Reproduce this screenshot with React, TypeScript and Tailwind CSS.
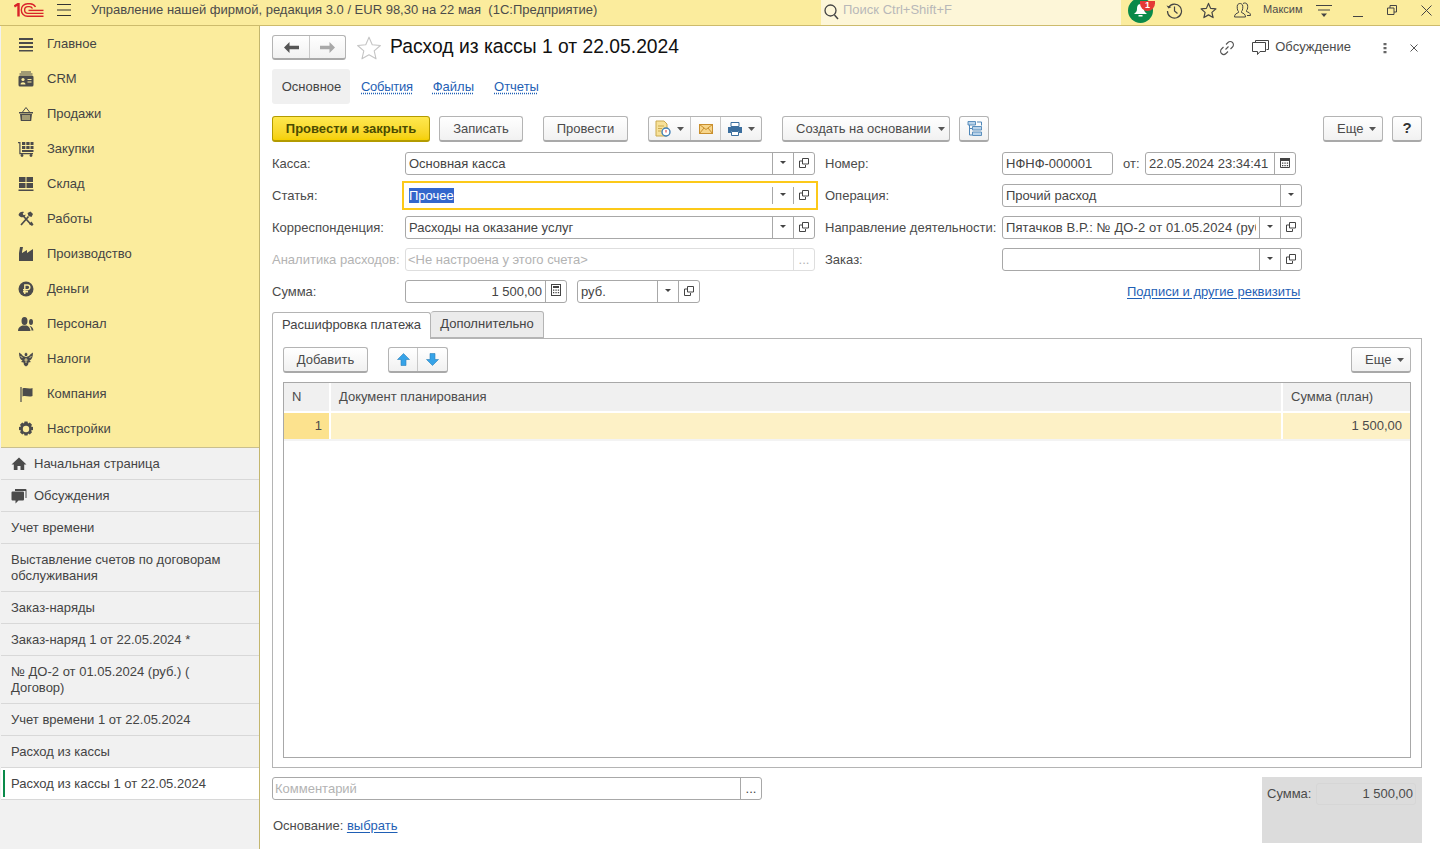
import React from 'react';

const G = '#4b4b4b';
const Svg = ({ s = 16, className = '', children, vb = '0 0 16 16' }: any) => (
  <svg width={s} height={s} viewBox={vb} className={'shrink-0 ' + className}>{children}</svg>
);

const Logo = () => (
  <svg width="30" height="14" viewBox="0 0 30 14" className="shrink-0">
    <g fill="none" stroke="#d9232a" strokeWidth="1.4">
      <path d="M0.300 3.500 L4.500 0.800 V13.500" strokeWidth="2.400" />
      <path d="M29.500 13.200 H13.500 A6.200 6.200 0 0 1 13.500 0.800 H16 A6.200 6.200 0 0 1 21.500 4" />
      <path d="M29.500 10.400 H14 A3.400 3.400 0 0 1 14 3.600 H15.500 A3.500 3.500 0 0 1 18.500 5.500" />
      <path d="M14.500 7.400 H29.500" />
    </g>
  </svg>
);
const Burger = () => (
  <Svg s={14} vb="0 0 14 14"><path d="M0 1.500H14M0 7H14M0 12.500H14" stroke="#333" strokeWidth="1" fill="none" /></Svg>
);
const IMain = () => <Svg><path d="M1 2h14v2H1zM1 6h14v2H1zM1 10h14v2H1zM1 14h14v1.500H1z" fill={G} /></Svg>;
const ICrm = () => <Svg><path d="M3 0.500h10v1H3zM1.500 2.500h13v1h-13z" fill={G} /><rect x="0.500" y="4.500" width="15" height="11" rx="1.500" fill={G} /><circle cx="5" cy="8.500" r="1.600" fill="#fbec9d" /><path d="M2.500 13.500c0-3 5-3 5 0zM9.500 8h4v1h-4zM9.500 10.500h4v1h-4z" fill="#fbec9d" /></Svg>;
const IBasket = () => <Svg><path d="M1 6h14v1.500H1zM2 8h12l-.8 7H2.800z" fill={G} /><path d="M4.500 6L8 1.500 11.500 6" stroke={G} fill="none" /><path d="M5 9v5M7 9v5M9 9v5M11 9v5" stroke="#fbec9d" /></Svg>;
const IBuy = () => <Svg><path d="M0 1h2.500v11H15v1.300H1.300V2.300H0z" fill={G} /><path d="M4 1h3.300v3H4zM8.300 1h3.300v3H8.300zM12.500 1h3v3h-3zM4 5h3.300v3H4zM8.300 5h3.300v3H8.300zM12.500 5h3v3h-3zM4 9h11.500v2H4z" fill={G} /><circle cx="4" cy="14.500" r="1.400" fill={G} /><circle cx="13" cy="14.500" r="1.400" fill={G} /></Svg>;
const IStore = () => <Svg><path d="M1 1h6.500v5H1zM8.500 1H15v5H8.500zM1 7h6.500v5H1zM8.500 7H15v5H8.500zM0.500 13.500h15V15h-15z" fill={G} /></Svg>;
const ITools = () => <Svg><path d="M3 14l7.500-8.500M3.500 3l9.500 10.500" stroke={G} strokeWidth="1.700" fill="none" /><path d="M0.500 4C1 1 4 0 6 1L4.500 3 5.500 4.500 7.500 3.500C8 6 3 8 .5 4zM9.500 2l3-1.500L15 3l-1.500 3-3-1z" fill={G} /><path d="M11 13l3 2 1.500-1.500-2-3z" fill={G} /></Svg>;
const IFactory = () => <Svg><path d="M1 15V7l1-6h3l-1 5v1l5-3v3l6-4v12z" fill={G} /></Svg>;
const IMoney = () => <Svg><circle cx="8" cy="8" r="7.500" fill={G} /><path d="M6.800 13V4h2.700a2.300 2.300 0 0 1 0 4.700H5M5 10.800h5" stroke="#fbec9d" strokeWidth="1.400" fill="none" /></Svg>;
const IPerson = () => <Svg><ellipse cx="6.500" cy="5" rx="3" ry="4" fill={G} /><path d="M0 15c0-4 3-5 4.500-5.500h4C10 10 12 11 12.500 15z" fill={G} /><ellipse cx="13" cy="6" rx="2" ry="3" fill={G} /><path d="M11.500 10c2 0 3.500 1.500 4 4.500h-2c0-2-.8-3.500-2-4.500z" fill={G} /></Svg>;
const ITax = () => <Svg><path d="M8 1.500L9.500 3 9 5h-2L6.500 3z" fill={G} /><path d="M1 1.500c0 4 1 7 3.500 8L3 11l2.500.5L6 14l2 1.500L10 14l.5-2.500L13 11l-1.500-1.500c2.500-1 3.500-4 3.500-8-1.500 1-3 2-4 3.500L8 6 5 5C4 3.500 2.500 2.500 1 1.500z" fill={G} /><path d="M8 7v5M6.300 9h3.400M2.500 5l2 2M13.500 5l-2 2" stroke="#fbec9d" strokeWidth=".8" /></Svg>;
const IFlag = () => <Svg><path d="M3 1v15" stroke={G} strokeWidth="1.200" /><path d="M4.500 2.500c3-1.500 6 1 10-.5v8c-4 1.500-7-1-10 .5z" fill={G} /></Svg>;
const IGear = () => <Svg><path d="M6.500 .5h3l.5 2 1.800-1 2.200 2.200-1 1.800 2 .5v3l-2 .5 1 1.800-2.200 2.200-1.800-1-.5 2h-3l-.5-2-1.800 1-2.200-2.200 1-1.800-2-.5v-3l2-.5-1-1.800L4.200 1.500 6 2.500z" fill={G} /><circle cx="8" cy="8" r="3.200" fill="#fbec9d" /></Svg>;
const IHome = () => <Svg><path d="M8 1.500L.5 8.500h2.300V14h3.700v-4h3v4h3.700V8.500h2.300z" fill={G} /></Svg>;
const IChat = () => <Svg><path d="M4 1h10.500a1 1 0 0 1 1 1v8h-1V3H4z" fill={G} /><path d="M1.500 3.500h10.500a1 1 0 0 1 1 1v7a1 1 0 0 1-1 1H7.500L4.500 15.500V12.500h-3a1 1 0 0 1-1-1v-7a1 1 0 0 1 1-1z" fill={G} /></Svg>;

const Nav = ({ icon, label }: any) => (
  <div className="h-[35px] flex items-center pl-[17px] gap-[13px] text-[13px] text-[#444]">
    {icon}
    <span>{label}</span>
  </div>
);

const Open = ({ icon, label }: any) => (
  <div className="border-b border-[#d8d8d8] px-[10px] py-[7.5px] leading-[16px] text-[13px] text-[#444] flex items-center gap-[7px]">
    {icon}
    <span>{label}</span>
  </div>
);

const Active = ({ label }: any) => (
  <div className="bg-white border-b border-[#d8d8d8] pl-[2px] py-[2px] text-[13px] leading-[16px] text-[#444]">
    <div className="border-l-2 border-[#0a8a4a] pl-[6px] py-[5.5px]">{label}</div>
  </div>
);

const Arrow = ({ c = '#555' }: any) => (
  <svg width="7" height="4" viewBox="0 0 7 4" className="shrink-0"><path d="M0 0h7L3.500 4z" fill={c} /></svg>
);
const SmallArrow = () => (
  <svg width="6" height="3" viewBox="0 0 6 3" className="shrink-0 -mt-[2px]"><path d="M0 0h6L3 3z" fill="#444" /></svg>
);
const OpenIcon = () => (
  <svg width="10" height="10" viewBox="0 0 10 10" className="shrink-0 -mt-[2px]"><path d="M3.500.5h6v5.500h-6zM3 3H.5V9.500H6.500V7" fill="none" stroke="#444" strokeWidth="1" /></svg>
);

const Field = ({ w, text, dd, open, suffix, right, focus, muted, disabled, tight }: any) => (
  <div
    className={
      'h-[23px] border flex items-stretch bg-white shrink-0 text-[13px] ' +
      (focus ? 'border-transparent outline-2 outline-offset-1 outline-[#fcc919] ' : disabled ? 'rounded-[3px] border-[#dedede] ' : 'rounded-[3px] border-[#a8a8a8] ')
    }
    style={{ width: w }}
  >
    <div className={'flex-1 min-w-0 overflow-hidden whitespace-nowrap leading-[21px] mr-[3px] ' + (tight ? 'pl-[2px] ' : 'pl-[3px] ') + (right ? 'text-right ' : '') + (muted ? 'text-[#b3b3b3] ' : 'text-[#444] ')}>
      {focus ? <span className="bg-[#3366cc] text-white">{text}</span> : text}
    </div>
    {dd && <div className={'w-[21px] flex items-center justify-center border-l ' + (focus ? 'border-[#a8a8a8] my-[2px]' : 'border-[#a8a8a8]')}><SmallArrow /></div>}
    {open && <div className={'w-[21px] flex items-center justify-center border-l ' + (focus ? 'border-[#a8a8a8] my-[2px]' : 'border-[#a8a8a8]')}><OpenIcon /></div>}
    {suffix && <div className={'w-[21px] flex items-center justify-center border-l ' + (disabled ? 'border-[#dedede] text-[#b3b3b3]' : 'border-[#a8a8a8] text-[#444]')}>{suffix}</div>}
  </div>
);

const Btn = ({ children, className = '' }: any) => (
  <div className={'h-[26px] rounded-[3px] border border-[#b4b4b4] border-b-2 border-b-[#a9a9a9] bg-gradient-to-b from-white to-[#f1f1f1] flex items-center justify-center text-[13px] text-[#4b4b4b] shrink-0 ' + className}>
    {children}
  </div>
);

const Label = ({ w, children, muted }: any) => (
  <div className={'text-[13px] shrink-0 whitespace-nowrap ' + (muted ? 'text-[#b3b3b3]' : 'text-[#4b4b4b]')} style={{ width: w }}>{children}</div>
);

const Cal = () => (
  <svg width="10" height="11" viewBox="0 0 10 11" className="-mt-[3px]"><path d="M.5 1.500h9v9h-9z" fill="none" stroke="#444" /><path d="M0 1h10v3H0zM2 5.500h1.300v1.300H2zM4.400 5.500h1.300v1.300H4.400zM6.800 5.500h1.300v1.300H6.800zM2 8h1.300v1.300H2zM4.400 8h1.300v1.300H4.400zM6.800 8h1.300v1.300H6.800z" fill="#444" /></svg>
);
const Calc = () => (
  <svg width="10" height="12" viewBox="0 0 10 12" className="-mt-[3px]"><rect x=".5" y=".5" width="9" height="11" fill="none" stroke="#444" /><path d="M2 2h6v2H2zM2 5.500h1.300v1.300H2zM4.400 5.500h1.300v1.300H4.400zM6.800 5.500h1.300v1.300H6.800zM2 8h1.300v1.300H2zM4.400 8h1.300v1.300H4.400zM6.800 8h1.300v1.300H6.800z" fill="#444" /></svg>
);

const Star = ({ s = 16, stroke = '#444', w = 1.2 }: any) => (
  <svg width={s} height={s} viewBox="0 0 24 24" className="shrink-0"><path d="M12 2l3 7 7.500.7-5.700 5 1.700 7.300L12 18.200 5.500 22l1.700-7.300-5.700-5L9 9z" fill="none" stroke={stroke} strokeWidth={w} strokeLinejoin="round" /></svg>
);

export default function App() {
  return (
    <div className="w-[1440px] h-[849px] overflow-hidden bg-white flex flex-col" style={{ fontFamily: '"Liberation Sans", Arial, sans-serif' }}>
      {/* top bar */}
      <div className="h-[26px] shrink-0 bg-[#fbec9d] border-b border-[#cdbb6c] pb-[5px] flex items-center text-[13px] text-[#4b4b4b]">
        <div className="ml-[14px]"><Logo /></div>
        <div className="ml-[13px]"><Burger /></div>
        <div className="ml-[20px] w-[730px] -mt-[1px] whitespace-nowrap">Управление нашей фирмой, редакция 3.0 / EUR 98,30 на 22 мая&nbsp; (1С:Предприятие)</div>
        <div className="w-[300px] self-stretch -mb-[5px] bg-[#fdf6d8] flex items-center pb-[5px] pl-[3px] gap-[4px] text-[#b8b8b8]">
          <svg width="15" height="16" viewBox="0 0 15 16" className="mt-[3px]"><circle cx="6.500" cy="6.500" r="5.500" fill="none" stroke="#444" strokeWidth="1.300" /><path d="M10.500 11l3.500 4" stroke="#444" strokeWidth="1.500" /></svg>
          <span className="-mt-[1px]">Поиск Ctrl+Shift+F</span>
        </div>
        <div className="relative ml-[7px] w-[25px] h-[25px] rounded-full bg-[#0a8a4a] flex items-center justify-center">
          <svg width="15" height="14" viewBox="0 0 15 14"><path d="M7.500 1c-3 0-3.500 3-3.500 5S3 9.500 1 11h13c-2-1.500-3-3-3-5s-.5-5-3.500-5zM5.500 12h4v1.500h-4z" fill="#fff" /></svg>
          <div className="absolute top-[3px] right-[-2px] w-[15px] h-[10px] rounded-b-full bg-[#e53935] text-white text-[9px] font-bold leading-[9px] text-center">1</div>
        </div>
        <div className="ml-[13px]">
          <svg width="17" height="17" viewBox="0 0 17 17"><path d="M2.500 5.500A7 7 0 1 1 1.500 9" fill="none" stroke="#444" strokeWidth="1.200" /><path d="M0.500 3.500l2 3 3-1.500z" fill="#444" /><path d="M8.500 4.500V9l3 2.500" fill="none" stroke="#444" strokeWidth="1.200" /></svg>
        </div>
        <div className="ml-[17px]"><Star s={17} w={1.7} /></div>
        <div className="ml-[17px]">
          <svg width="17" height="16" viewBox="0 0 17 16"><path d="M.5 15c0-3 2-3.500 4-4.500v-1C3 8.500 3 4 3.500 3c1-2 4-2 5 0 .5 1 .5 5.500-1 6.500v1c2 1 4 1.500 4 4.500z" fill="none" stroke="#444" /><path d="M9 1.500c1.500-1 4-.5 4.500 1.500.4 1.500.3 4.500-1 5.500v1c2 1 4 1 4 4h-3.500" fill="none" stroke="#444" /></svg>
        </div>
        <div className="ml-[12px] text-[11px] w-[44px] -mt-[1px]">Максим</div>
        <div className="ml-[9px] mt-[1px]">
          <svg width="16" height="15" viewBox="0 0 16 15"><path d="M0 2.500h16M2 7h12" stroke="#444" strokeWidth="1" /><path d="M5 10.500h6L8 14z" fill="#444" /></svg>
        </div>
        <div className="ml-[21px] mt-[4px]"><svg width="10" height="10" viewBox="0 0 10 10"><path d="M0 9.500h10" stroke="#444" /></svg></div>
        <div className="ml-[24px]"><svg width="10" height="10" viewBox="0 0 10 10"><path d="M.5 3h6.500v6.500H.5zM3 3V.5h6.500V7H7" fill="none" stroke="#444" /></svg></div>
        <div className="ml-[24px]"><svg width="11" height="11" viewBox="0 0 11 11"><path d="M.5.5l10 10M10.500.5l-10 10" stroke="#444" /></svg></div>
      </div>

      <div className="flex flex-1 min-h-0">
        {/* sidebar */}
        <div className="w-[260px] shrink-0 border-r border-[#c3b66e] bg-[#f1f1f1] pl-px flex flex-col">
          <div className="bg-[#fbec9d] border-b border-[#c9bf8e] h-[422px] shrink-0">
            <Nav icon={<IMain />} label="Главное" />
            <Nav icon={<ICrm />} label="CRM" />
            <Nav icon={<IBasket />} label="Продажи" />
            <Nav icon={<IBuy />} label="Закупки" />
            <Nav icon={<IStore />} label="Склад" />
            <Nav icon={<ITools />} label="Работы" />
            <Nav icon={<IFactory />} label="Производство" />
            <Nav icon={<IMoney />} label="Деньги" />
            <Nav icon={<IPerson />} label="Персонал" />
            <Nav icon={<ITax />} label="Налоги" />
            <Nav icon={<IFlag />} label="Компания" />
            <Nav icon={<IGear />} label="Настройки" />
          </div>
          <Open icon={<IHome />} label="Начальная страница" />
          <Open icon={<IChat />} label="Обсуждения" />
          <Open label="Учет времени" />
          <Open label="Выставление счетов по договорам обслуживания" />
          <Open label="Заказ-наряды" />
          <Open label="Заказ-наряд 1 от 22.05.2024 *" />
          <Open label={<>№ ДО-2 от 01.05.2024 (руб.) (<br />Договор)</>} />
          <Open label="Учет времени 1 от 22.05.2024" />
          <Open label="Расход из кассы" />
          <Active label="Расход из кассы 1 от 22.05.2024" />
        </div>

        {/* main */}
        <div className="flex-1 min-w-0 pl-[12px] pr-[18px] flex flex-col">
          {/* title */}
          <div className="flex items-center h-[27px] mt-[8px]">
            <div className="h-[25px] w-[74px] rounded-[3px] border border-[#b4b4b4] border-b-2 border-b-[#a9a9a9] bg-gradient-to-b from-white to-[#f1f1f1] flex">
              <div className="w-[37px] flex items-center justify-center border-r border-[#c8c8c8]">
                <svg width="15" height="11" viewBox="0 0 15 11"><path d="M0 5.500L5.500 0v3.800H15v3.400H5.500V11z" fill="#555" /></svg>
              </div>
              <div className="flex-1 flex items-center justify-center">
                <svg width="15" height="11" viewBox="0 0 15 11"><path d="M15 5.500L9.500 0v3.800H0v3.400h9.500V11z" fill="#a8a8a8" /></svg>
              </div>
            </div>
            <div className="ml-[10px]"><Star s={26} stroke="#c4c4c4" w={1} /></div>
            <div className="ml-[8px] text-[19.3px] text-[#111] leading-[25px] -mt-[2px]">Расход из кассы 1 от 22.05.2024</div>
            <div className="ml-auto flex items-center text-[13px] text-[#4b4b4b]">
              <svg width="16" height="16" viewBox="0 0 16 16" className="mr-[17px]"><path d="M6.500 9.500l3-3M7 4.500l2-2a3 3 0 0 1 4.500 4.500l-2 2M9 11.500l-2 2A3 3 0 0 1 2.500 9l2-2" fill="none" stroke="#555" strokeWidth="1.100" /></svg>
              <svg width="17" height="16" viewBox="0 0 17 16" className="mr-[6px]"><path d="M3.500 2.500V.5h13v9h-2M.5 2.500h13v9H8l-2.500 3v-3H.5z" fill="#fff" stroke="#444" /></svg>
              <span className="mr-[32px] -mt-px">Обсуждение</span>
              <svg width="4" height="12" viewBox="0 0 4 12" className="mr-[23px]"><path d="M.5 1h3v2.300h-3zM.5 5h3v2.300h-3zM.5 9h3v2.300h-3z" fill="#666" /></svg>
              <svg width="8" height="8" viewBox="0 0 8 8" className="mr-[4px]"><path d="M.5.5l7 7M7.500.5l-7 7" stroke="#555" /></svg>
            </div>
          </div>

          {/* sections */}
          <div className="flex items-center h-[35px] mt-[8px] text-[13px]">
            <div className="h-[35px] w-[78px] rounded-[3px] bg-[#f0f0f0] flex items-center justify-center text-[#444] pl-px">Основное</div>
            <a className="ml-[11px] text-[#1f5fb5] underline decoration-dotted underline-offset-2 tracking-[-0.28px]">События</a>
            <a className="ml-[20px] text-[#1f5fb5] underline decoration-dotted underline-offset-2">Файлы</a>
            <a className="ml-[20px] text-[#1f5fb5] underline decoration-dotted underline-offset-2">Отчеты</a>
          </div>

          {/* command bar */}
          <div className="flex items-center h-[26px] mt-[12px]">
            <div className="h-[26px] w-[158px] rounded-[3px] border border-[#b39b00] border-b-2 bg-gradient-to-b from-[#ffe84d] to-[#f5d000] flex items-center justify-center text-[13px] font-bold text-[#4b4b00]">Провести и закрыть</div>
            <Btn className="ml-[9px] w-[84px]">Записать</Btn>
            <Btn className="ml-[20px] w-[85px]">Провести</Btn>
            <Btn className="ml-[20px] w-[114px] !justify-start">
              <div className="w-[42px] h-full flex items-center justify-center gap-[6px] border-r border-[#c8c8c8]">
                <svg width="16" height="17" viewBox="0 0 16 17"><path d="M1 1h8l3 3v12H1z" fill="#f7e199" stroke="#c9a94f" /><path d="M3 6h6M3 8.500h4M3 11h3" stroke="#c9a94f" /><circle cx="11" cy="12" r="4" fill="#fff" stroke="#3f7fb5" strokeWidth="1.400" /><path d="M11 10v2.500" stroke="#d33" /></svg>
                <Arrow />
              </div>
              <div className="w-[30px] h-full flex items-center justify-center border-r border-[#c8c8c8]">
                <svg width="14" height="10" viewBox="0 0 14 10"><rect x=".5" y=".5" width="13" height="9" fill="#f7d58a" stroke="#c98f2e" /><path d="M.5.500L7 5.500 13.500.5M.5 9.500l4.500-5.500M13.500 9.500L9 4" fill="none" stroke="#c98f2e" /></svg>
              </div>
              <div className="flex-1 h-full flex items-center justify-center gap-[6px]">
                <svg width="14" height="14" viewBox="0 0 14 14"><path d="M3 .5h8v4H3z" fill="#fff" stroke="#3b6e9e" /><path d="M0 5h14v6h-3V9H3v2H0z" fill="#3b6e9e" /><path d="M3.500 9.500h7v4h-7z" fill="#fff" stroke="#3b6e9e" /></svg>
                <Arrow />
              </div>
            </Btn>
            <Btn className="ml-[20px] w-[168px] gap-[7px] !justify-start pl-[13px]">Создать на основании<Arrow /></Btn>
            <Btn className="ml-[9px] w-[30px]">
              <svg width="15" height="15" viewBox="0 0 15 15"><path d="M1 .5h7.500v3.500H1zM5.500 5.500h9V9h-9zM5.500 11h9v3.500h-9z" fill="#b9d3ea" stroke="#4e86b8" strokeWidth=".9" /><path d="M10 1h4.500v3.500M2.500 4v10h2.500M2.500 7.500h2.500" fill="none" stroke="#4e86b8" /></svg>
            </Btn>
            <Btn className="ml-auto w-[60px] gap-[6px] mr-[9px] !justify-start pl-[13px]">Еще<Arrow /></Btn>
            <Btn className="w-[30px] font-bold !text-[#333] !text-[15px]">?</Btn>
          </div>

          {/* form */}
          <div className="flex flex-col gap-[9px] mt-[10px]">
            <div className="flex items-center">
              <Label w={133}>Касса:</Label>
              <Field w={410} text="Основная касса" dd open />
              <Label w={187}><span className="ml-[10px]">Номер:</span></Label>
              <Field w={111} text="НФНФ-000001" />
              <Label w={32}><span className="ml-[10px]">от:</span></Label>
              <Field w={151} text="22.05.2024 23:34:41" suffix={<Cal />} />
            </div>
            <div className="flex items-center">
              <Label w={133}>Статья:</Label>
              <Field w={410} text="Прочее" dd open focus />
              <Label w={187}><span className="ml-[10px]">Операция:</span></Label>
              <Field w={300} text="Прочий расход" dd />
            </div>
            <div className="flex items-center">
              <Label w={133}>Корреспонденция:</Label>
              <Field w={410} text="Расходы на оказание услуг" dd open />
              <Label w={187}><span className="ml-[10px]">Направление деятельности:</span></Label>
              <Field w={300} text={<span className="tracking-[0.12px]">Пятачков В.Р.: № ДО-2 от 01.05.2024 (руб.)</span>} dd open />
            </div>
            <div className="flex items-center">
              <Label w={133} muted>Аналитика расходов:</Label>
              <Field w={410} text="<Не настроена у этого счета>" muted disabled tight suffix="..." />
              <Label w={187}><span className="ml-[10px]">Заказ:</span></Label>
              <Field w={300} text="" dd open />
            </div>
            <div className="flex items-center">
              <Label w={133}>Сумма:</Label>
              <Field w={162} text="1 500,00" right suffix={<Calc />} />
              <div className="w-[10px]" />
              <Field w={123} text="руб." dd open />
              <a className="ml-[427px] text-[13px] text-[#1f5fb5] underline underline-offset-2 whitespace-nowrap">Подписи и другие реквизиты</a>
            </div>
          </div>

          {/* tabs */}
          <div className="flex items-end h-[27px] mt-[8px] text-[13px] text-[#444]">
            <div className="h-[27px] w-[159px] rounded-t-[3px] border border-[#b4b4b4] border-b-0 bg-white relative z-10 -mb-px pb-[2px] flex items-center justify-center">Расшифровка платежа</div>
            <div className="h-[27px] w-[113px] rounded-t-[3px] border border-[#b4b4b4] border-l-0 bg-[#ebebeb] pb-[2px] flex items-center justify-center">Дополнительно</div>
          </div>
          <div className="h-[430px] shrink-0 border border-[#b4b4b4] px-[10px] pt-[8px] flex flex-col">
            <div className="flex items-center h-[26px]">
              <Btn className="w-[85px]">Добавить</Btn>
              <Btn className="ml-[20px] w-[60px]">
                <div className="w-[29px] h-full flex items-center justify-center border-r border-[#c8c8c8]">
                  <svg width="13" height="13" viewBox="0 0 13 13"><path d="M6.500.5l6 6H9v6H4v-6H.5z" fill="#36a3e8" stroke="#2b7fb8" strokeWidth=".6" /></svg>
                </div>
                <div className="flex-1 h-full flex items-center justify-center">
                  <svg width="13" height="13" viewBox="0 0 13 13"><path d="M6.500 12.500l6-6H9V.5H4v6H.5z" fill="#36a3e8" stroke="#2b7fb8" strokeWidth=".6" /></svg>
                </div>
              </Btn>
              <Btn className="ml-auto w-[60px] gap-[6px] !justify-start pl-[13px]">Еще<Arrow /></Btn>
            </div>
            <div className="mt-[9px] h-[376px] border border-[#a8a8a8] flex flex-col text-[13px] text-[#4b4b4b]">
              <div className="flex h-[30px] bg-[#f0f0f0] border-b-2 border-white shrink-0">
                <div className="w-[47px] pl-[8px] flex items-center border-r-2 border-white">N</div>
                <div className="flex-1 pl-[8px] flex items-center border-r-2 border-white">Документ планирования</div>
                <div className="w-[127px] pl-[8px] flex items-center">Сумма (план)</div>
              </div>
              <div className="flex h-[28px] bg-[#fdf1c6] border-b-2 border-[#f3f3f3] shrink-0">
                <div className="w-[47px] pr-[7px] bg-[#fce28e] flex items-center justify-end border-r-2 border-white">1</div>
                <div className="flex-1 border-r-2 border-white" />
                <div className="w-[127px] pr-[8px] flex items-center justify-end">1 500,00</div>
              </div>
            </div>
          </div>

          {/* footer */}
          <div className="flex mt-[9px]">
            <div className="flex-1 flex flex-col">
              <Field w={490} text="Комментарий" muted tight suffix="..." />
              <div className="mt-[16px] ml-px text-[13px] text-[#4b4b4b]">Основание: <a className="text-[#1f5fb5] underline underline-offset-2">выбрать</a></div>
            </div>
            <div className="w-[160px] h-[66px] bg-[#dcdcdc] flex items-start pt-[6px] pl-[5px] pr-[6px] text-[13px] text-[#4b4b4b]">
              <span className="w-[49px] leading-[22px]">Сумма:</span>
              <div className="flex-1 h-[22px] rounded-[3px] border border-[#d6d6d6] pr-[2px] text-right leading-[20px]">1 500,00</div>
            </div>
          </div>
        </div>
      </div>
    </div>
  );
}
